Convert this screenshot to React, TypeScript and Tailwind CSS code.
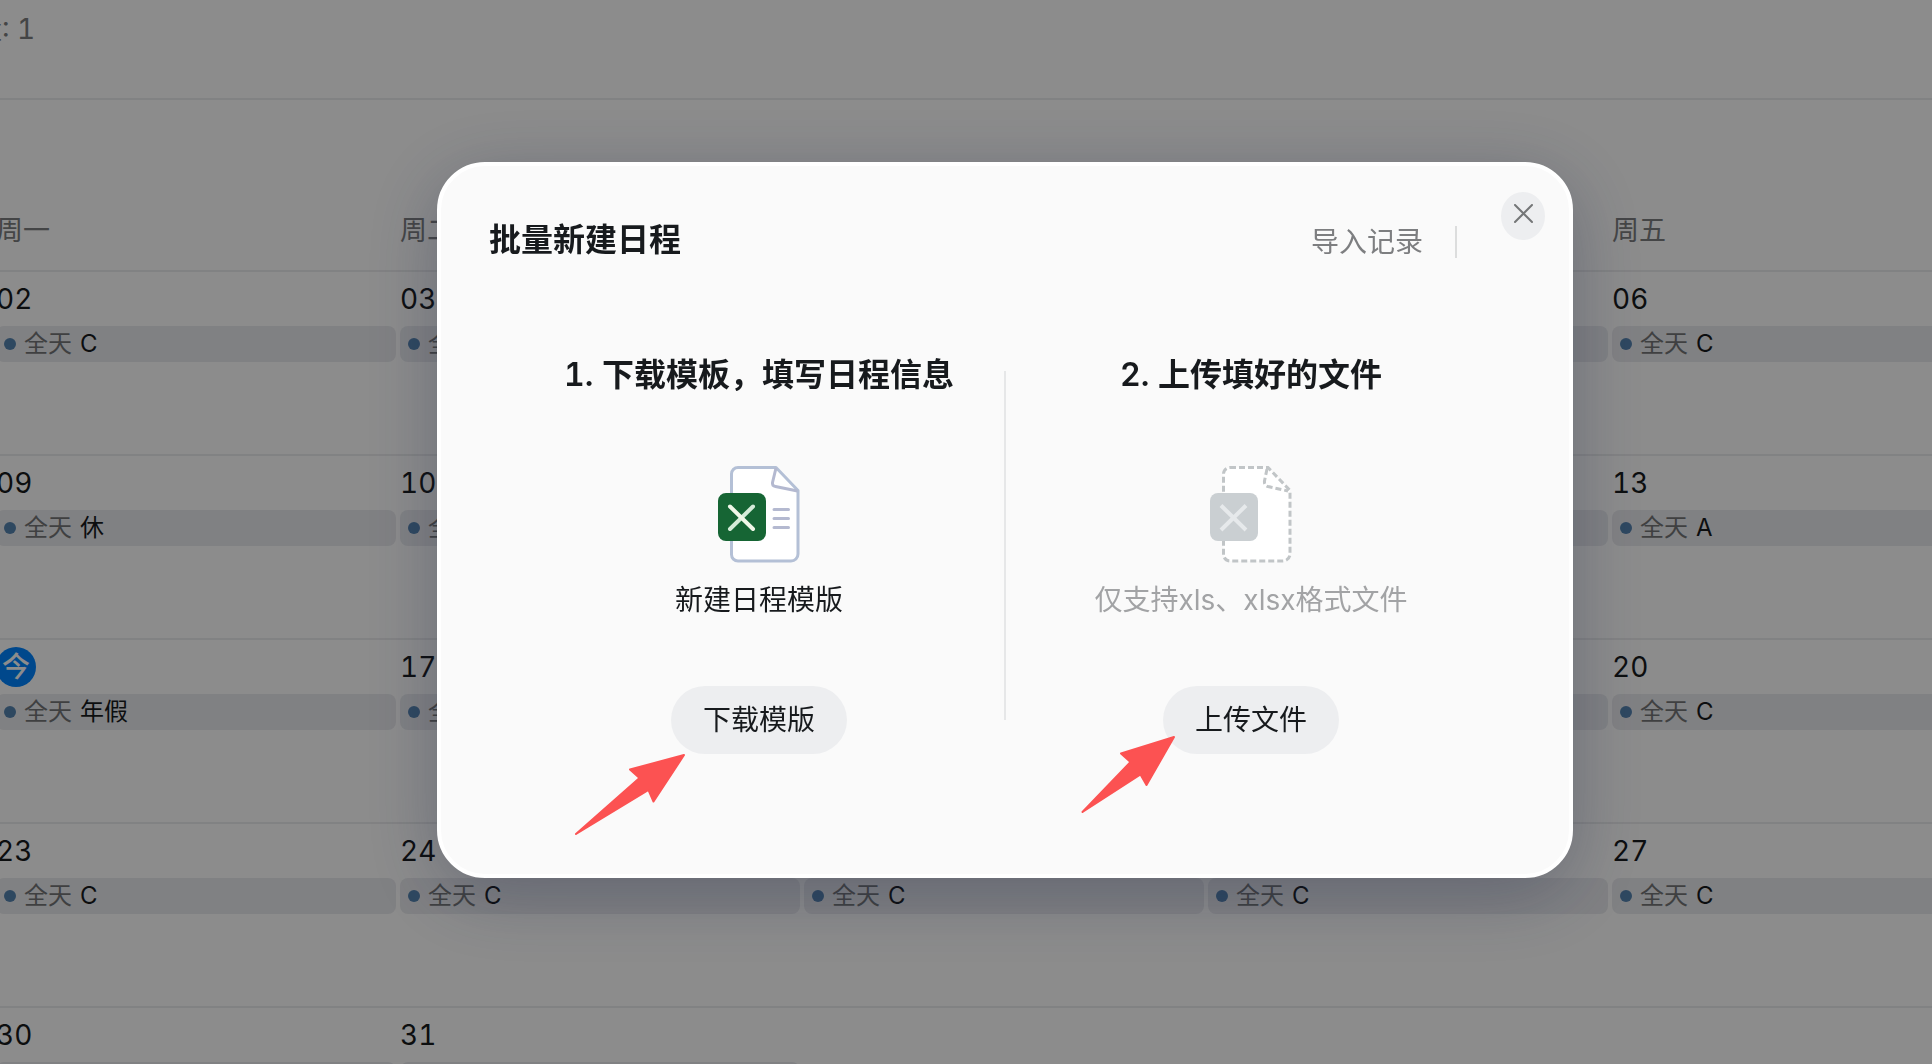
import { useState } from "react";

type Day = { date: string; event: string; today?: boolean };

const weekdays = ["周一", "周二", "周三", "周四", "周五"];

const weeks: Day[][] = [
  [
    { date: "02", event: "C" },
    { date: "03", event: "C" },
    { date: "04", event: "C" },
    { date: "05", event: "C" },
    { date: "06", event: "C" },
  ],
  [
    { date: "09", event: "休" },
    { date: "10", event: "C" },
    { date: "11", event: "C" },
    { date: "12", event: "C" },
    { date: "13", event: "A" },
  ],
  [
    { date: "今", event: "年假", today: true },
    { date: "17", event: "C" },
    { date: "18", event: "C" },
    { date: "19", event: "C" },
    { date: "20", event: "C" },
  ],
  [
    { date: "23", event: "C" },
    { date: "24", event: "C" },
    { date: "25", event: "C" },
    { date: "26", event: "C" },
    { date: "27", event: "C" },
  ],
  [
    { date: "30", event: "C" },
    { date: "31", event: "C" },
  ],
];

function DayCell({ day }: { day: Day }) {
  return (
    <div className="flex min-w-0 flex-col pr-1">
      <div className="flex h-[54px] items-center">
        {day.today ? (
          <span className="flex h-10 w-10 items-center justify-center rounded-full bg-[#0084ff] text-[28px] font-medium leading-10 text-white">
            {day.date}
          </span>
        ) : (
          <span className="text-[28px] leading-10 text-[#171a1d]">{day.date}</span>
        )}
      </div>
      <div className="flex h-9 items-center rounded-lg bg-[#eaebef] pl-2 text-2xl">
        <span className="h-3 w-3 rounded-full bg-[#5583b0]" />
        <span className="ml-2 text-[#747677]">全天</span>
        <span className="ml-2 text-[#171a1d]">{day.event}</span>
      </div>
    </div>
  );
}

function Calendar() {
  return (
    <div className="h-screen overflow-hidden bg-white tabular-nums">
      <header className="-ml-[26px] h-[98px] pt-[9px] text-[28px] leading-10 text-[#7d7e80]">量: 1</header>
      {/* the week grid runs past both sides of the window */}
      <div className="-ml-1 -mr-[84px]">
        <div className="grid grid-cols-5 border-t-2 border-[#ecedee] pt-[111px]">
          {weekdays.map((name) => (
            <div key={name} className="h-[59px] text-[27px] leading-10 text-[#7d7e80]">
              {name}
            </div>
          ))}
        </div>
        {weeks.map((week) => (
          <div key={week[0].date} className="grid h-[184px] grid-cols-5 border-t-2 border-[#ecedee]">
            {week.map((day) => (
              <DayCell key={day.date} day={day} />
            ))}
          </div>
        ))}
      </div>
    </div>
  );
}

function TemplateIcon() {
  return (
    <svg width="82" height="98" viewBox="0 0 82 98" fill="none" aria-hidden="true">
      <path
        d="M20 1.500H58L80 24.500V88A7 7 0 0 1 73 95H20A6.500 6.500 0 0 1 13.500 88.500V8A6.500 6.500 0 0 1 20 1.500Z"
        fill="#fff"
        stroke="#b4c0d6"
        strokeWidth="3"
        strokeLinejoin="round"
      />
      <path d="M58 2L54.500 16.500Q54 20 57.500 20.500L79.500 25" stroke="#b4b9d0" strokeWidth="3" strokeLinejoin="round" />
      <path d="M56 43.500H70.500M56 52.500H70.500M56 61.500H70.500" stroke="#b4b9d0" strokeWidth="3" strokeLinecap="round" />
      <rect y="27" width="48" height="48" rx="8" fill="#166534" />
      <path d="M35 40.500L12 63" stroke="#d5ecd9" strokeWidth="4" strokeLinecap="round" />
      <path d="M12 40.500L35 63" stroke="#f0f7e8" strokeWidth="4" strokeLinecap="round" />
    </svg>
  );
}

function UploadIcon() {
  return (
    <svg width="82" height="98" viewBox="0 0 82 98" fill="none" aria-hidden="true">
      <path
        d="M20 1.500H58L80 24.500V88A7 7 0 0 1 73 95H20A6.500 6.500 0 0 1 13.500 88.500V8A6.500 6.500 0 0 1 20 1.500Z"
        fill="#fff"
        stroke="#c1c5c7"
        strokeWidth="3"
        strokeDasharray="6 3"
      />
      <path d="M57 3L54.500 15Q54 19.500 58 20.500L78 25" stroke="#c1c5c7" strokeWidth="3" strokeDasharray="6 3" />
      <rect y="27" width="48" height="48" rx="8" fill="#cacfd2" />
      <path d="M36 39.500L11 64M11 39.500L36 64" stroke="#e6e9eb" strokeWidth="4" />
    </svg>
  );
}

function ImportDialog({ onClose }: { onClose: () => void }) {
  return (
    <div className="fixed inset-0 flex items-center justify-center bg-black/45 pb-6 pl-[78px]">
      <div
        role="dialog"
        aria-modal="true"
        aria-labelledby="dialog-title"
        className="relative w-full max-w-[1136px] rounded-[48px] border-4 border-white bg-[#fafafa] pb-[120px] tabular-nums shadow-[0_16px_72px_rgba(32,40,70,0.32)]"
      >
        <header className="flex items-start pl-12 pr-[112px] pt-[50px]">
          <h1 id="dialog-title" className="text-[32px] font-semibold leading-12 text-[#171a1d]">
            批量新建日程
          </h1>
          <div className="ml-auto flex items-center pt-1.5">
            <a href="#records" className="text-[28px] leading-10 text-[#7d7e80]">
              导入记录
            </a>
            <span className="ml-8 h-8 w-0.5 bg-[#dcdddd]" />
          </div>
        </header>
        <button
          type="button"
          aria-label="关闭"
          onClick={onClose}
          className="absolute right-6 top-[26px] flex h-12 w-11 justify-center rounded-[50%] bg-[#edeef0] pt-3"
        >
          <svg width="20" height="20" viewBox="0 0 20 20" fill="none" stroke="#747677" strokeWidth="2" strokeLinecap="round">
            <path d="M2 1L19 18M19 1L2 18" />
          </svg>
        </button>

        <div className="relative mx-[72px] mt-[87px] grid grid-cols-2">
          <section className="relative flex flex-col items-center">
            <h2 className="text-[32px] font-semibold leading-12 text-[#171a1d]">1. 下载模板，填写日程信息</h2>
            <div className="mt-[67px]">
              <TemplateIcon />
            </div>
            <p className="mt-4 text-[28px] leading-10 text-[#171a1d]">新建日程模版</p>
            <button
              type="button"
              className="mt-[66px] h-[68px] rounded-full bg-[#edeef0] px-8 text-[28px] text-[#171a1d]"
            >
              下载模版
            </button>
            <svg
              className="absolute left-[61px] top-[402px]"
              width="112"
              height="84"
              viewBox="0 0 112 84"
              fill="#fc5252"
              stroke="#fc5252"
              strokeLinejoin="round"
              strokeWidth="2"
              aria-hidden="true"
            >
              <path d="M110 2L56 16.500L65.500 25L2 81L74.500 37L79.500 48.500Z" />
            </svg>
          </section>
          <section className="relative flex flex-col items-center">
            <h2 className="text-[32px] font-semibold leading-12 text-[#171a1d]">2. 上传填好的文件</h2>
            <div className="mt-[67px]">
              <UploadIcon />
            </div>
            <p className="mt-4 text-[28px] leading-10 text-[#a2a3a5]">仅支持xls、xlsx格式文件</p>
            <button
              type="button"
              className="mt-[66px] h-[68px] rounded-full bg-[#edeef0] px-8 text-[28px] text-[#171a1d]"
            >
              上传文件
            </button>
            <svg
              className="absolute left-[76px] top-[384px]"
              width="96"
              height="80"
              viewBox="0 0 96 80"
              fill="#fc5252"
              stroke="#fc5252"
              strokeLinejoin="round"
              strokeWidth="2"
              aria-hidden="true"
            >
              <path d="M93 2L40 18.500L49.500 27L1.500 77L59.500 39.500L65.500 50Z" />
            </svg>
          </section>
          <span className="absolute bottom-[34px] left-1/2 top-5 w-0.5 -translate-x-1/2 bg-[#e6e7e8]" />
        </div>
      </div>
    </div>
  );
}

export default function App() {
  const [open, setOpen] = useState(true);

  return (
    <main className="font-[Inter,'Noto_Sans_CJK_SC',sans-serif]">
      <Calendar />
      {open && <ImportDialog onClose={() => setOpen(false)} />}
    </main>
  );
}
